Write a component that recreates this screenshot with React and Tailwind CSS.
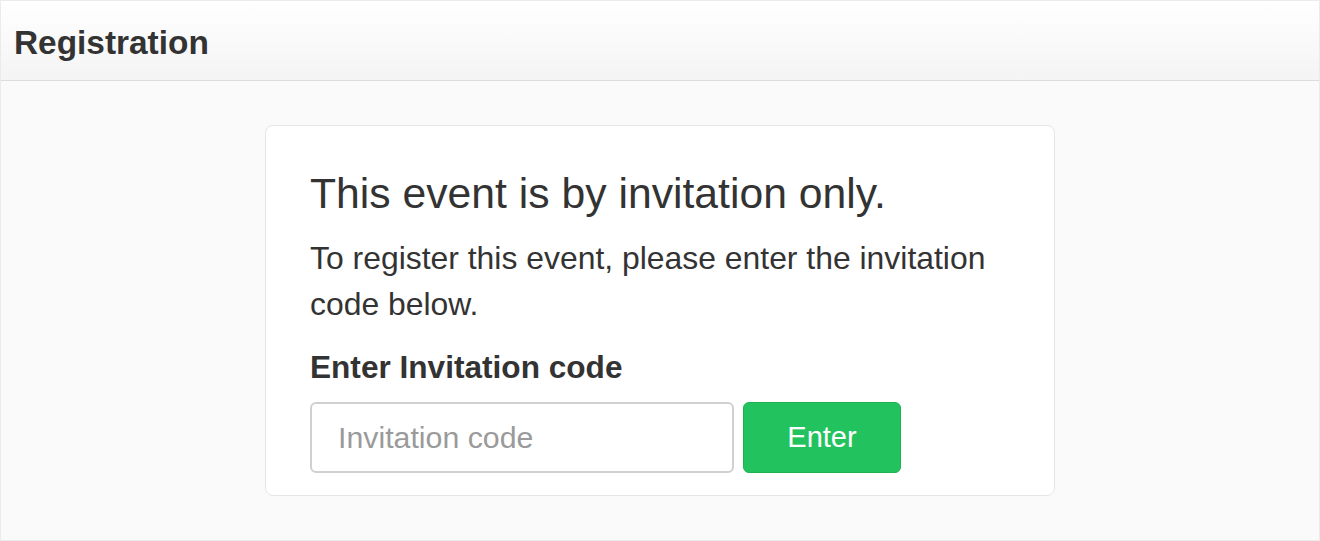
import React, { useState } from 'react'

const App = () => {
    const [code, setCode] = useState("")

    return (
        <div className="min-h-[541px] bg-[#fafafa] border border-[#ebebeb] font-['Liberation_Sans',Arial,sans-serif] text-[#333]">
            {/* Header */}
            <div className="h-[80px] pt-[24px] pl-[13px] border-b border-[#dcdcdc] bg-gradient-to-b from-white to-[#f4f4f4]">
                <h1 className="text-[33.4px] leading-[36px] font-bold">Registration</h1>
            </div>

            {/* Invitation card */}
            <div className="flex justify-center pt-[44px] pb-[44px]">
                <div className="w-[790px] bg-white border border-[#e6e6e6] rounded-lg pt-[42px] pb-[22px] px-[44px]">
                    <h2 className="text-[42.7px] leading-[50px]">This event is by invitation only.</h2>
                    <p className="mt-[17px] text-[31.9px] leading-[46px]">
                        To register this event, please enter the invitation code below.
                    </p>

                    <form className="mt-[20px]" onSubmit={(e) => e.preventDefault()}>
                        <label className="block text-[31.6px] leading-[40px] font-bold">
                            Enter Invitation code
                        </label>
                        <div className="mt-[15px] flex gap-[9px]">
                            <input
                                type="text"
                                value={code}
                                onChange={(e) => setCode(e.target.value)}
                                placeholder="Invitation code"
                                className="w-[424px] h-[71px] px-[26px] text-[30.3px] border-2 border-[#d0d0d0] rounded-md bg-white placeholder:text-[#9a9a9a] focus:outline-none"
                            />
                            <button
                                type="submit"
                                className="w-[158px] h-[71px] text-[29px] text-white bg-[#22c35e] border border-[#1cb453] rounded-md"
                            >
                                Enter
                            </button>
                        </div>
                    </form>
                </div>
            </div>
        </div>
    )
}

export default App
